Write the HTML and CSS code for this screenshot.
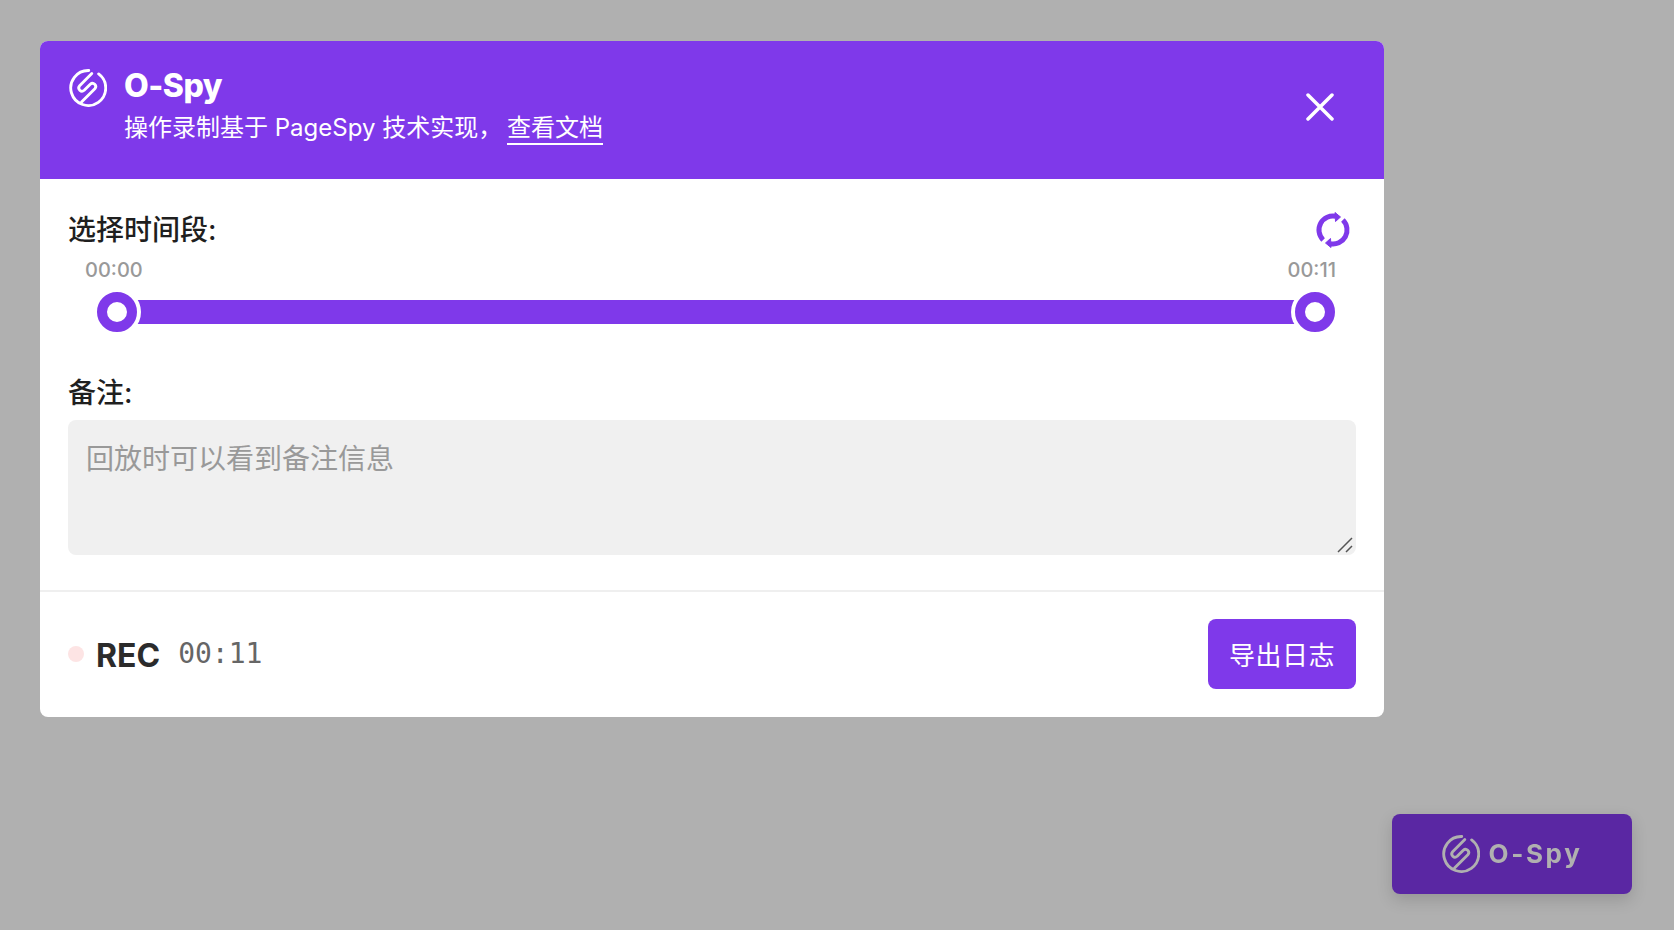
FILE: index.html
```html
<!DOCTYPE html>
<html lang="en">
<head>
    <meta charset="UTF-8">
    <meta name="viewport" content="width=device-width, initial-scale=1.0">
    <title>O-Spy</title>
    <link rel="stylesheet" href="styles.css">
</head>
<body>
    <div class="modal">
        <div class="modal-header">
            <svg class="logo" viewBox="0 0 100 100">
                <path d="M52 4 A46 46 0 1 0 78 13"/>
                <path d="M60 12 L28 44 A8.500 8.500 0 0 0 40 56 L56 40 A8.500 8.500 0 0 1 68 52 L33 87"/>
            </svg>
            <div class="header-text">
                <h1>O-Spy</h1>
                <p>操作录制基于 PageSpy 技术实现， <a href="#">查看文档</a></p>
            </div>
            <svg class="close" viewBox="0 0 28 28">
                <path d="M2 2 L26 26 M26 2 L2 26"/>
            </svg>
        </div>

        <div class="modal-body">
            <div class="label-row">
                <label>选择时间段:</label>
                <svg class="refresh" viewBox="0 0 36 36">
                    <path class="arc" d="M8.100 27.900 A14 14 0 0 1 21 4.300"/>
                    <path class="arc" d="M27.900 8.100 A14 14 0 0 1 15 31.700"/>
                    <path class="head" d="M20 0.500 L25.500 5 L20.500 9.500 Z"/>
                    <path class="head" d="M16 35.500 L10.500 31 L15.500 26.500 Z"/>
                </svg>
            </div>
            <div class="time-labels">
                <span>00:00</span>
                <span>00:11</span>
            </div>
            <div class="slider">
                <div class="track"></div>
                <span class="handle handle-start"></span>
                <span class="handle handle-end"></span>
            </div>
            <label class="remark-label">备注:</label>
            <div class="remark-wrap">
                <textarea class="remark" placeholder="回放时可以看到备注信息"></textarea>
                <svg class="resizer" viewBox="0 0 16 16">
                    <path d="M1 15 L15 1 M9 15 L15 9"/>
                </svg>
            </div>
        </div>

        <div class="modal-footer">
            <div class="rec">
                <span class="rec-dot"></span>
                <span class="rec-text">REC</span>
                <span class="rec-time">00:11</span>
            </div>
            <button class="export">导出日志</button>
        </div>
    </div>

    <div class="float-btn">
        <svg class="logo logo-dim" viewBox="0 0 100 100">
            <path d="M52 4 A46 46 0 1 0 78 13"/>
            <path d="M60 12 L28 44 A8.500 8.500 0 0 0 40 56 L56 40 A8.500 8.500 0 0 1 68 52 L33 87"/>
        </svg>
        <span class="float-text">O-Spy</span>
    </div>
</body>
</html>
```

FILE: styles.css
```css
* {
    margin: 0;
    padding: 0;
    box-sizing: border-box;
}
body {
    font-family: 'Inter', 'Noto Sans CJK SC', sans-serif;
    background-color: #b0b0b0;
    color: #1f1f1f;
    height: 930px;
    padding: 41px 0 0 40px;
    overflow: hidden;
}
.modal {
    width: 1344px;
    height: 676px;
    background-color: #fff;
    border-radius: 8px;
    overflow: hidden;
    display: flex;
    flex-direction: column;
}
.modal-header {
    height: 138px;
    background-color: #7f39ea;
    color: #fff;
    display: flex;
    align-items: flex-start;
    padding: 28px 50px 0 29px;
}
.logo {
    width: 38px;
    height: 38px;
    flex-shrink: 0;
    fill: none;
    stroke: #fff;
    stroke-width: 7.500;
    stroke-linecap: round;
    stroke-linejoin: round;
}
.header-text {
    flex: 1;
    margin-left: 17px;
}
h1 {
    font-size: 32px;
    line-height: 32px;
    font-weight: 800;
    letter-spacing: -0.5px;
    margin-top: 1px;
}
.header-text p {
    font-size: 24px;
    line-height: 36px;
    margin-top: 8px;
}
.header-text a {
    color: #fff;
    text-decoration: none;
    border-bottom: 2px solid #fff;
    margin-left: -2px;
    padding-bottom: 1px;
}
.close {
    width: 28px;
    height: 28px;
    margin-top: 24px;
    fill: none;
    stroke: #fff;
    stroke-width: 3.500;
    stroke-linecap: round;
}
.modal-body {
    flex: 1;
    padding: 34px 28px 0;
    border-bottom: 2px solid #efefef;
}
.label-row {
    display: flex;
    justify-content: space-between;
    align-items: center;
    height: 34px;
}
label {
    font-size: 28px;
    line-height: 34px;
    font-weight: 500;
    display: block;
}
.refresh {
    width: 36px;
    height: 36px;
    flex-shrink: 0;
    margin-right: 5px;
}
.refresh .arc {
    fill: none;
    stroke: #7f39ea;
    stroke-width: 5;
}
.refresh .head {
    fill: #7f39ea;
    stroke: #7f39ea;
    stroke-width: 1;
    stroke-linejoin: round;
}
.time-labels {
    display: flex;
    justify-content: space-between;
    padding: 0 20px 0 17px;
    margin-top: 11px;
    font-size: 20px;
    font-weight: 500;
    line-height: 24px;
    color: #999;
}
.slider {
    position: relative;
    height: 40px;
    margin: 10px 21px 0 29px;
    display: flex;
    align-items: center;
}
.track {
    width: 100%;
    height: 24px;
    background-color: #7f39ea;
}
.handle {
    position: absolute;
    top: 0;
    width: 40px;
    height: 40px;
    border: 10px solid #7f39ea;
    border-radius: 50%;
    background-color: #fff;
    box-shadow: 0 0 0 4px #fff;
}
.handle-start {
    left: 0;
}
.handle-end {
    right: 0;
}
.remark-label {
    margin-top: 44px;
}
.remark-wrap {
    position: relative;
    height: 135px;
    margin-top: 10px;
}
.remark {
    display: block;
    width: 100%;
    height: 100%;
    padding: 21px 18px;
    border: none;
    outline: none;
    resize: none;
    border-radius: 8px;
    background-color: #f0f0f0;
    font-family: 'Inter', 'Noto Sans CJK SC', sans-serif;
    font-size: 28px;
    line-height: 36px;
}
.remark::placeholder {
    color: #999;
}
.resizer {
    position: absolute;
    right: 3px;
    bottom: 2px;
    width: 16px;
    height: 16px;
    fill: none;
    stroke: #555;
    stroke-width: 1.500;
}
.modal-footer {
    height: 125px;
    display: flex;
    justify-content: space-between;
    align-items: center;
    padding: 0 28px 2px;
}
.rec {
    display: flex;
    align-items: center;
}
.rec-dot {
    width: 16px;
    height: 16px;
    border-radius: 50%;
    background-color: #fde4e4;
    margin-right: 12px;
}
.rec-text {
    font-size: 32px;
    font-weight: 700;
    color: #2b2b2b;
    margin-right: 18px;
    margin-top: 4px;
}
.rec-time {
    font-family: 'DejaVu Sans Mono', monospace;
    font-size: 28px;
    color: #666;
}
.export {
    width: 148px;
    height: 70px;
    background-color: #7f39ea;
    border: none;
    border-radius: 8px;
    color: #fff;
    font-family: 'Inter', 'Noto Sans CJK SC', sans-serif;
    font-size: 26px;
    letter-spacing: 0.5px;
}
.float-btn {
    position: fixed;
    right: 42px;
    bottom: 36px;
    width: 240px;
    height: 80px;
    background-color: #5a27a3;
    border-radius: 8px;
    box-shadow: 0 6px 16px rgba(0, 0, 0, 0.15);
    display: flex;
    justify-content: center;
    align-items: center;
    gap: 9px;
    color: #b0b0b0;
    font-size: 26px;
    font-weight: 700;
    letter-spacing: 2.600px;
}
.float-text {
    margin-bottom: 2px;
}
.logo-dim {
    stroke: #b0b0b0;
}
```
